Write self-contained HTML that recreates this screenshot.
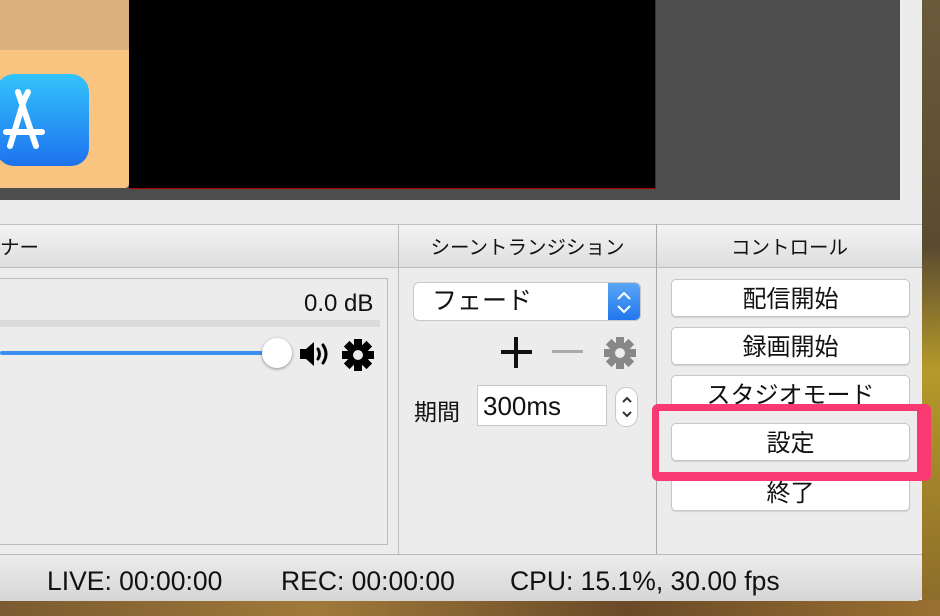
<!DOCTYPE html><html><head><meta charset="utf-8"><style>
body{margin:0;width:940px;height:616px;overflow:hidden;position:relative;background:#ececec;font-family:"Liberation Sans","Noto Sans CJK JP",sans-serif;color:#111}
.a{position:absolute}
.btn{position:absolute;left:671px;width:239px;height:38px;background:#fff;border:1px solid #c8c8c8;border-radius:5px;box-shadow:0 1px 1px rgba(0,0,0,.12);font-size:24px;text-align:center;line-height:40px;box-sizing:border-box}
.hdr{position:absolute;top:224px;height:44px;background:linear-gradient(#f3f3f3,#dedede);border-top:1px solid #c0c0c0;border-bottom:1px solid #bcbcbc;font-size:19.5px;line-height:46px;text-align:center;box-sizing:border-box}
</style></head><body>
<div class="a" style="left:922px;top:0;width:18px;height:616px;background:linear-gradient(#6b5a3a,#5a4a30 40%,#b59a2a 60%,#8a6a2a)"></div>
<div class="a" style="left:0;top:600px;width:940px;height:16px;background:linear-gradient(90deg,#7a5a30,#a07a3a,#6a4a28,#9a7030)"></div>
<div class="a" style="left:0;top:0;width:900px;height:200px;background:#4d4d4d"></div>
<div class="a" style="left:0;top:0;width:129px;height:50px;background:#dcb07a"></div>
<div class="a" style="left:0;top:50px;width:129px;height:138px;background:#f8c47f;border-radius:0 0 4px 0"></div>
<div class="a" style="left:-4px;top:74px;width:93px;height:92px;border-radius:18px;background:linear-gradient(#33c4fb,#1e72ef)"></div>
<svg class="a" style="left:0;top:74px" width="90" height="92"><g stroke="#fff" stroke-width="6" stroke-linecap="round" fill="none"><path d="M24 26 L10 72"/><path d="M18 18 L36 72"/><path d="M6 58 H42"/><path d="M28 18 L24 26"/></g></svg>
<div class="a" style="left:129px;top:0;width:526px;height:188px;background:#000;border-right:1px solid #a00;border-bottom:1px solid #a00"></div>
<div class="hdr" style="left:0;width:398px;text-align:left">ナー</div>
<div class="hdr" style="left:399px;width:257px">シーントランジション</div>
<div class="hdr" style="left:657px;width:265px">コントロール</div>
<div class="a" style="left:398px;top:224px;width:1px;height:330px;background:#bbb"></div>
<div class="a" style="left:656px;top:224px;width:1px;height:330px;background:#aaa"></div>
<div class="a" style="left:0;top:278px;width:388px;height:267px;border:1px solid #bdbdbd;border-left:none;box-sizing:border-box;background:#ececec"></div>
<div class="a" style="left:304px;top:290px;font-size:24px">0.0 dB</div>
<div class="a" style="left:0;top:320px;width:380px;height:7px;background:#dadada"></div>
<div class="a" style="left:0;top:351px;width:275px;height:4px;background:#3d8ff0;border-radius:2px"></div>
<div class="a" style="left:262px;top:338px;width:30px;height:30px;border-radius:50%;background:#fff;box-shadow:0 1px 3px rgba(0,0,0,.4)"></div>
<svg class="a" style="left:298px;top:340px" width="34" height="28"><path d="M2 9h6l8-7v24l-8-7H2z" fill="#000"/><g stroke="#000" stroke-width="3" fill="none" stroke-linecap="round"><path d="M20 9q3 5 0 10"/><path d="M25 5q6 9 0 18"/></g></svg>
<svg class="a" style="left:341px;top:338px" width="34" height="34" viewBox="0 0 34 34"><g fill="#000"><circle cx="17" cy="17" r="11"/><g id="t"><rect x="13" y="1" width="8" height="32"/><rect x="1" y="13" width="32" height="8"/></g><use href="#t" transform="rotate(45 17 17)"/></g><circle cx="17" cy="17" r="5" fill="#ececec"/></svg>
<div class="a" style="left:413px;top:282px;width:228px;height:39px;background:#fff;border:1px solid #c8c8c8;border-radius:6px;box-sizing:border-box;font-size:25px;line-height:37px;padding-left:18px;overflow:hidden">フェード<div class="a" style="right:0;top:0;width:32px;height:39px;background:linear-gradient(#5aa6f6,#1f74ec)"><svg width="32" height="39"><g stroke="#fff" stroke-width="2" fill="none"><path d="M10 16l6-6 6 6"/><path d="M10 23l6 6 6-6"/></g></svg></div></div>
<div class="a" style="left:501px;top:350px;width:31px;height:4px;background:#111"></div>
<div class="a" style="left:514px;top:337px;width:4px;height:31px;background:#111"></div>
<div class="a" style="left:552px;top:350px;width:31px;height:3px;background:#aaa"></div>
<svg class="a" style="left:603px;top:336px" width="34" height="34" viewBox="0 0 34 34"><g fill="#888"><circle cx="17" cy="17" r="11"/><g id="u"><rect x="13" y="1" width="8" height="32"/><rect x="1" y="13" width="32" height="8"/></g><use href="#u" transform="rotate(45 17 17)"/></g><circle cx="17" cy="17" r="5" fill="#ececec"/></svg>
<div class="a" style="left:414px;top:393px;font-size:23px">期間</div>
<div class="a" style="left:477px;top:385px;width:130px;height:41px;background:#fff;border:1px solid #c8c8c8;box-sizing:border-box;font-size:26px;line-height:41px;padding-left:5px">300ms</div>
<div class="a" style="left:615px;top:387px;width:23px;height:40px;background:#fff;border:1px solid #c8c8c8;border-radius:11px;box-sizing:border-box"><svg width="22" height="38"><g stroke="#333" stroke-width="2" fill="none"><path d="M7 14l4-4 4 4"/><path d="M7 24l4 4 4-4"/></g></svg></div>
<div class="btn" style="top:279px">配信開始</div>
<div class="btn" style="top:327px">録画開始</div>
<div class="btn" style="top:375px">スタジオモード</div>
<div class="btn" style="top:473px">終了</div>
<div class="a" style="left:652px;top:404px;width:279px;height:77px;background:#f93a72;border-radius:6px"></div>
<div class="a" style="left:659px;top:411px;width:258px;height:61px;background:#ececec"></div>
<div class="btn" style="top:423px">設定</div>
<div class="a" style="left:0;top:554px;width:922px;height:46px;background:linear-gradient(#ececec,#d6d6d6);border-top:1px solid #b8b8b8;border-radius:0 0 6px 0;font-size:26.5px;line-height:52px">
<span class="a" style="left:47px">LIVE: 00:00:00</span><span class="a" style="left:281px">REC: 00:00:00</span><span class="a" style="left:510px">CPU: 15.1%, 30.00 fps</span></div>
</body></html>
